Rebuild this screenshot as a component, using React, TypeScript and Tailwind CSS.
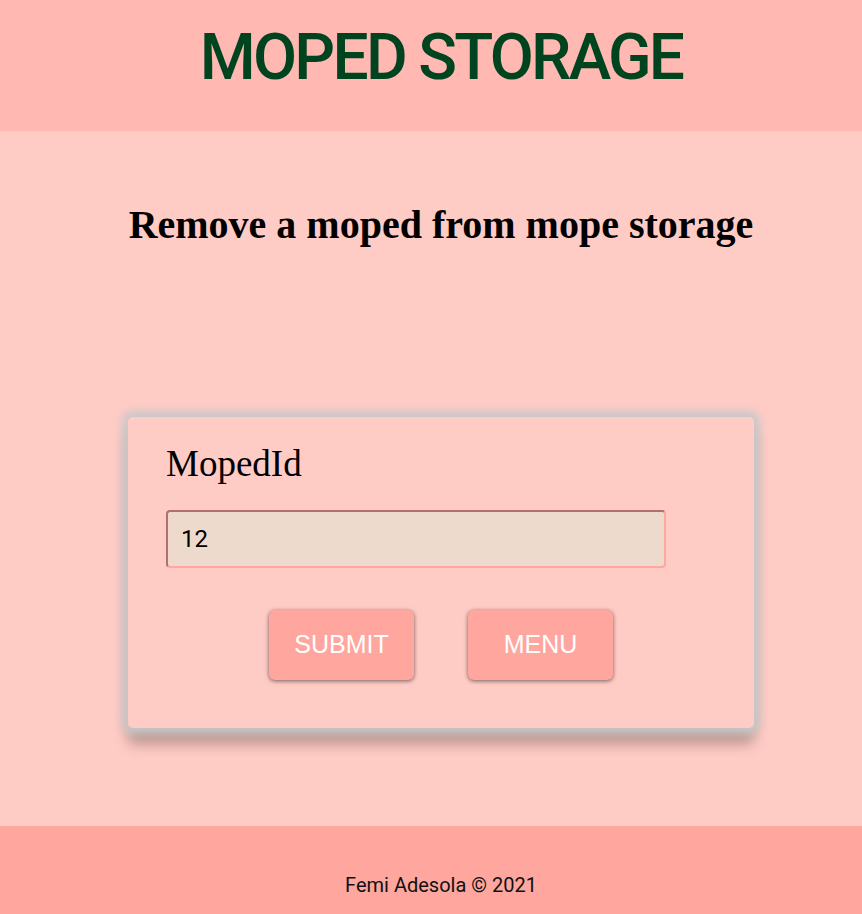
import React, { useState } from 'react';

export default function App() {
  const [mopedId, setMopedId] = useState('12');

  const onSubmit = (event: React.FormEvent<HTMLFormElement>) => {
    event.preventDefault();
  };

  return (
    <div className="flex min-h-[914px] flex-col bg-[#ffcbc5]">
      <header className="h-[131px] bg-[#ffb8b2] pl-5 pt-[20px]">
        <h1 className="text-center font-['Roboto',sans-serif] text-[64px] font-medium leading-[75px] tracking-[-2.7px] text-[#00441f]">
          MOPED STORAGE
        </h1>
      </header>

      <main className="flex flex-1 flex-col items-center pl-5">
        <h2 className="mt-[70px] text-center font-['Liberation_Serif',serif] text-[40px] font-bold leading-[48px] text-black">
          Remove a moped from mope storage
        </h2>

        <form
          onSubmit={onSubmit}
          className="mt-[168px] flex h-[311px] w-[626px] flex-col rounded-[5px] bg-[#ffcbc5] pl-[38px] pt-[26px] shadow-[0_0_8px_6px_rgba(200,200,200,1),0_16px_14px_rgba(0,0,0,0.28)]"
        >
          <label htmlFor="mopedId" className="font-['Liberation_Serif',serif] text-[37px] leading-[42px] text-black">
            MopedId
          </label>
          <input
            id="mopedId"
            type="text"
            value={mopedId}
            onChange={(e) => setMopedId(e.target.value)}
            className="mt-[25px] h-[58px] w-[500px] rounded-[4px] border-2 border-b-[#ffa69e] border-l-[#b3706b] border-r-[#ffa69e] border-t-[#b3706b] bg-[#eddacd] pl-[13px] font-['Roboto',sans-serif] text-[24px] text-black focus:outline-none"
          />
          <div className="mt-[42px] flex justify-center gap-[54px] pr-[38px]">
            <button
              type="submit"
              className="h-[70px] w-[145px] rounded-[6px] bg-[#ffa69e] font-['Liberation_Sans',sans-serif] text-[25px] text-white shadow-[0_1px_4px_rgba(0,0,0,0.55)]"
            >
              SUBMIT
            </button>
            <button
              type="button"
              className="h-[70px] w-[145px] rounded-[6px] bg-[#ffa69e] font-['Liberation_Sans',sans-serif] text-[25px] text-white shadow-[0_1px_4px_rgba(0,0,0,0.55)]"
            >
              MENU
            </button>
          </div>
        </form>
      </main>

      <footer className="h-[88px] bg-[#ffa69e] pl-5 pt-[45px]">
        <p className="text-center font-['Roboto',sans-serif] text-[20px] leading-[28px] text-[#111]">
          Femi Adesola © 2021
        </p>
      </footer>
    </div>
  );
}
